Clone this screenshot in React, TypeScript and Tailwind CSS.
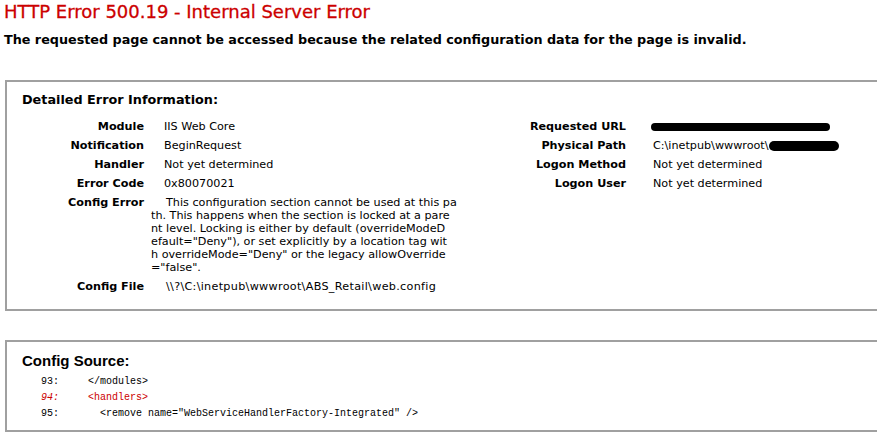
import React from "react";

const leftRows = [
  { label: "Module", value: "IIS Web Core" },
  { label: "Notification", value: "BeginRequest" },
  { label: "Handler", value: "Not yet determined" },
  { label: "Error Code", value: "0x80070021" },
];

const configErrorLines = [
  "This configuration section cannot be used at this pa",
  "th. This happens when the section is locked at a pare",
  "nt level. Locking is either by default (overrideModeD",
  'efault="Deny"), or set explicitly by a location tag wit',
  'h overrideMode="Deny" or the legacy allowOverride',
  '="false".',
];

const sourceLines = [
  { num: "93:", code: "</modules>", highlight: false },
  { num: "94:", code: "<handlers>", highlight: true },
  { num: "95:", code: '  <remove name="WebServiceHandlerFactory-Integrated" />', highlight: false },
];

const Redacted = ({ width, height }: { width: string; height: string }) => (
  <span className={`inline-block align-middle bg-black rounded-full ${width} ${height}`} />
);

const App: React.FC = () => {
  return (
    <div className="w-[877px] h-[436px] overflow-hidden bg-white text-black font-['DejaVu_Sans',Verdana,sans-serif]">
      <h2 className="pl-[4px] h-[24px] leading-[24px] text-[18px] font-normal text-[#cc0000] whitespace-nowrap [-webkit-text-stroke:0.3px_#cc0000]">
        HTTP Error 500.19 - Internal Server Error
      </h2>
      <p className="mt-[7px] pl-[4px] h-[18px] leading-[18px] text-[12.75px] font-bold whitespace-nowrap">
        The requested page cannot be accessed because the related configuration data for the page is invalid.
      </p>

      {/* Detailed error box */}
      <div className="mt-[31px] ml-[5px] w-[900px] border-2 border-[#a0a0a0] pl-[15px] pt-[10px] pb-[13px]">
        <h3 className="h-[16px] leading-[16px] text-[12.8px] font-bold">Detailed Error Information:</h3>
        <div className="mt-[9px] flex text-[11.2px]">
          <div className="w-[458px]">
            {leftRows.map((row) => (
              <div key={row.label} className="flex h-[19px] leading-[19px]">
                <span className="w-[122px] text-right font-bold">{row.label}</span>
                <span className="ml-[20px] whitespace-nowrap">{row.value}</span>
              </div>
            ))}
            <div className="flex py-[3px]">
              <span className="w-[122px] text-right font-bold leading-[13px]">Config Error</span>
              <div className="ml-[7px] leading-[13px] whitespace-nowrap">
                {configErrorLines.map((line, i) => (
                  <div key={i} className={i === 0 ? "pl-[15px]" : ""}>
                    {line}
                  </div>
                ))}
              </div>
            </div>
            <div className="flex h-[19px] leading-[19px]">
              <span className="w-[122px] text-right font-bold">Config File</span>
              <span className="ml-[22px] whitespace-nowrap tracking-[0.3px]">
                \\?\C:\inetpub\wwwroot\ABS_Retail\web.config
              </span>
            </div>
          </div>

          <div>
            <div className="flex h-[19px] leading-[19px]">
              <span className="w-[146px] text-right font-bold">Requested URL</span>
              <span className="ml-[25px] whitespace-nowrap">
                <Redacted width="w-[179px]" height="h-[8px]" />
              </span>
            </div>
            <div className="flex h-[19px] leading-[19px]">
              <span className="w-[146px] text-right font-bold">Physical Path</span>
              <span className="ml-[27px] whitespace-nowrap">
                C:\inetpub\wwwroot\
                <Redacted width="w-[70px]" height="h-[10px]" />
              </span>
            </div>
            <div className="flex h-[19px] leading-[19px]">
              <span className="w-[146px] text-right font-bold">Logon Method</span>
              <span className="ml-[27px] whitespace-nowrap">Not yet determined</span>
            </div>
            <div className="flex h-[19px] leading-[19px]">
              <span className="w-[146px] text-right font-bold">Logon User</span>
              <span className="ml-[27px] whitespace-nowrap">Not yet determined</span>
            </div>
          </div>
        </div>
      </div>

      {/* Config source box */}
      <div className="mt-[29px] ml-[5px] w-[900px] border-2 border-[#a0a0a0] pl-[15px] pt-[10px] pb-[8px]">
        <h3 className="h-[18px] leading-[18px] text-[15px] font-bold font-['Liberation_Sans',Arial,sans-serif]">
          Config Source:
        </h3>
        <div className="mt-[4px] font-['Liberation_Mono','Courier_New',monospace] text-[10px]">
          {sourceLines.map((line) => (
            <div
              key={line.num}
              className={`flex h-[16px] leading-[16px] ${line.highlight ? "text-[#cc0000]" : "text-black"}`}
            >
              <span className={`ml-[19px] w-[47px] ${line.highlight ? "italic" : ""}`}>{line.num}</span>
              <span className="whitespace-pre">{line.code}</span>
            </div>
          ))}
        </div>
      </div>
    </div>
  );
};

export default App;
